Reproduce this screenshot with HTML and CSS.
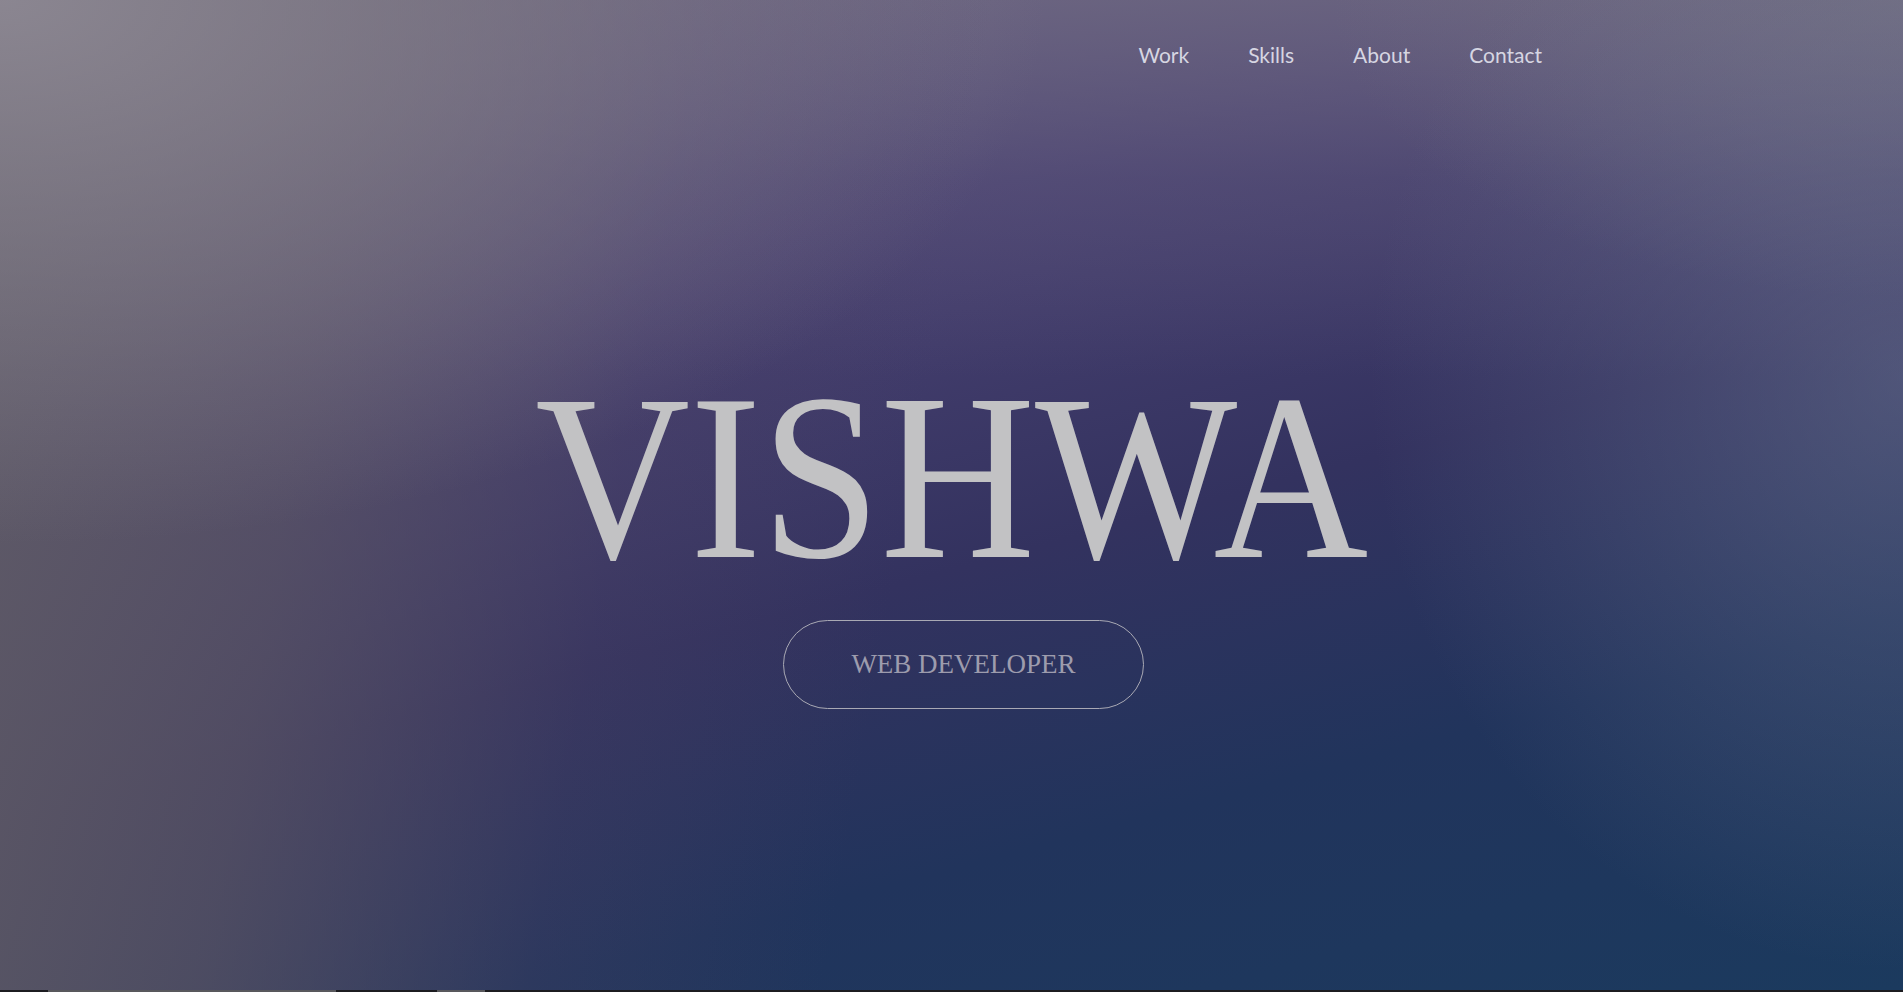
FILE: index.html
```html
<!DOCTYPE html>
<html lang="en">
<head>
<meta charset="utf-8">
<title>Vishwa — Web Developer</title>
<link rel="stylesheet" href="styles.css">
</head>
<body>
<section class="hero">
  <nav class="nav">
    <a href="#work" class="nav-link">Work</a>
    <a href="#skills" class="nav-link">Skills</a>
    <a href="#about" class="nav-link">About</a>
    <a href="#contact" class="nav-link">Contact</a>
  </nav>
  <div class="hero-body">
    <h1 class="title">VISHWA</h1>
    <div class="role">WEB DEVELOPER</div>
  </div>
</section>
<div class="strip">
  <span class="seg seg-dark seg-a"></span>
  <span class="seg seg-light seg-b"></span>
  <span class="seg seg-dark seg-c"></span>
  <span class="seg seg-light seg-d"></span>
  <span class="seg seg-dark seg-e"></span>
</div>
</body>
</html>
```
FILE: styles.css
```css
html, body {
  margin: 0;
  padding: 0;
  height: 100%;
  overflow: hidden;
  background: #1c1c20;
}

.hero {
  height: 990px;
  display: flex;
  flex-direction: column;
  background:
    radial-gradient(ellipse 28% 60% at 100% 38%, rgba(112, 120, 148, 0.5) 0%, rgba(112, 120, 148, 0) 100%),
    radial-gradient(ellipse 30% 30% at 100% 0%, rgba(120, 118, 132, 0.6) 0%, rgba(120, 118, 132, 0) 100%),
    radial-gradient(ellipse 55% 55% at 0% 0%, rgba(146, 141, 152, 0.85) 0%, rgba(146, 141, 152, 0) 100%),
    linear-gradient(100deg, rgba(96, 92, 102, 0.95) 0%, rgba(92, 86, 100, 0.7) 18%, rgba(80, 70, 100, 0.25) 34%, rgba(70, 60, 100, 0) 48%),
    linear-gradient(180deg, rgba(112, 106, 130, 0.75) 0%, rgba(100, 94, 125, 0.35) 18%, rgba(90, 84, 120, 0) 38%),
    linear-gradient(165deg, #6a6284 0%, #4a4272 30%, #33325f 55%, #21345c 75%, #1b3a5e 100%);
}

.nav {
  display: flex;
  justify-content: flex-end;
  gap: 59px;
  padding: 40px 361px 0 0;
}

.nav-link {
  font-family: Lato, "Noto Sans", sans-serif;
  font-size: 21px;
  line-height: 30px;
  color: #d6d6e2;
  text-decoration: none;
}

.hero-body {
  display: flex;
  flex-direction: column;
  align-items: center;
  padding-top: 288px;
}

.title {
  margin: 0;
  font-family: "Liberation Serif", serif;
  font-weight: 400;
  font-size: 238px;
  line-height: 1;
  color: #c2c2c4;
  transform: scaleX(0.9);
}

.role {
  margin: 24px 0 0 24px;
  box-sizing: border-box;
  width: 361px;
  height: 89px;
  display: flex;
  align-items: center;
  justify-content: center;
  border: 1.5px solid #a9a9b4;
  border-radius: 45px;
  font-family: "Liberation Serif", serif;
  font-size: 27px;
  color: #9d9cad;
}

.strip {
  display: flex;
  height: 2px;
}

.seg { display: block; height: 2px; }
.seg-dark { background: #1c1c20; }
.seg-light { background: #58585c; }
.seg-a { width: 48px; }
.seg-b { width: 288px; }
.seg-c { width: 101px; }
.seg-d { width: 48px; }
.seg-e { flex: 1; }
```
